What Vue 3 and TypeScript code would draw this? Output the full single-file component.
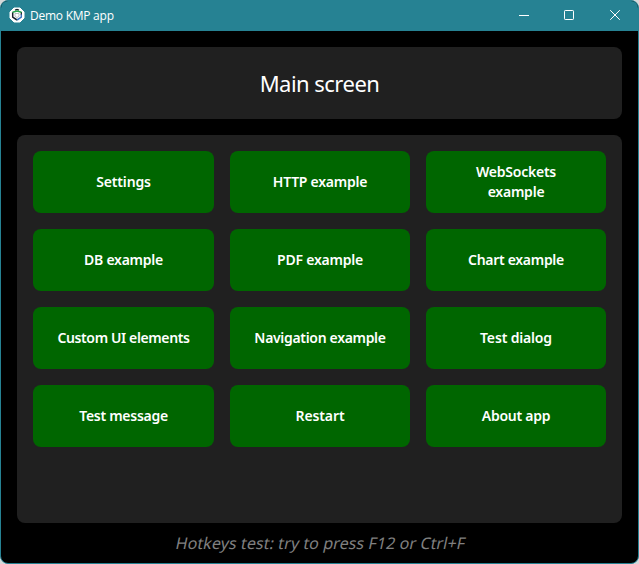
<script setup lang="ts">
interface MenuItem {
  lines: string[]
  spacing: number
}

const items: MenuItem[] = [
  { lines: ['Settings'], spacing: -0.15 },
  { lines: ['HTTP example'], spacing: -0.25 },
  { lines: ['WebSockets', 'example'], spacing: -0.23 },
  { lines: ['DB example'], spacing: -0.26 },
  { lines: ['PDF example'], spacing: -0.22 },
  { lines: ['Chart example'], spacing: -0.3 },
  { lines: ['Custom UI elements'], spacing: -0.38 },
  { lines: ['Navigation example'], spacing: -0.32 },
  { lines: ['Test dialog'], spacing: -0.16 },
  { lines: ['Test message'], spacing: -0.28 },
  { lines: ['Restart'], spacing: -0.1 },
  { lines: ['About app'], spacing: -0.28 },
]
</script>

<template>
  <div class="backdrop">
    <div class="window">
      <header class="titlebar">
        <svg class="logo" width="16" height="16" viewBox="0 0 16 16">
          <path d="M5 1h6l4 4v6l-4 4H5l-4-4V5z" fill="#fff" stroke="#fff" stroke-linejoin="round" />
          <path d="M3.7 5.2v5L8 13" fill="none" stroke="#18212c" stroke-width="1.5" />
          <path d="M6 3.2 8 2.5l2 .7M12.3 5v3" fill="none" stroke="#18212c" stroke-width="1.3" />
          <path d="M3.5 5.2 8 4l4.5 1.2" fill="none" stroke="#28a84d" stroke-width="1.6" />
          <path d="M12.3 7.5v2.7L8 13" fill="none" stroke="#3973bd" stroke-width="1.5" />
          <path d="M6 6.5h4v2.8L8 10.6 6 9.3z" fill="#fff" stroke="#8b999e" stroke-width=".6" />
        </svg>
        <span class="caption">Demo KMP app</span>
        <div class="controls">
          <svg width="46" height="30" viewBox="0 0 46 30"><path d="M18 15.5h10" /></svg>
          <svg width="46" height="30" viewBox="0 0 46 30"><rect x="17.5" y="10.5" width="9" height="9" rx=".7" /></svg>
          <svg width="46" height="30" viewBox="0 0 46 30"><path d="m17.2 10.2 9.6 9.6m0-9.6-9.6 9.6" /></svg>
        </div>
      </header>
      <main class="body">
        <section class="heading"><h1>Main screen</h1></section>
        <section class="panel">
          <button v-for="item in items" :key="item.lines[0]" :style="{ letterSpacing: item.spacing + 'px' }">
            <span v-for="line in item.lines" :key="line">{{ line }}</span>
          </button>
        </section>
        <footer><span>Hotkeys test: try to press F12 or Ctrl+F</span></footer>
      </main>
    </div>
  </div>
</template>

<style>
body { background: #d5d8d9; overflow: hidden; }
</style>

<style scoped>
.backdrop { height: 564px; background: #d5d8d9; }
.window {
  box-sizing: border-box;
  height: 564px;
  border: 1px solid #268293;
  border-radius: 8px;
  background: #000;
  overflow: hidden;
  display: flex;
  flex-direction: column;
}
.titlebar {
  height: 30px;
  flex: none;
  display: flex;
  align-items: center;
  background: #268293;
  color: #fff;
}
.logo { margin-left: 8px; margin-top: -2px; }
.caption {
  margin-left: 5px;
  font: 12px/30px "Open Sans", "Noto Sans", sans-serif;
  letter-spacing: -0.25px;
}
.controls { display: flex; margin-left: auto; margin-right: -1px; }
.controls svg { display: block; fill: none; stroke: #fff; stroke-width: 1; margin-top: -2px; }
.body {
  flex: 1;
  display: flex;
  flex-direction: column;
  padding: 16px 16px 0;
  font-family: "Noto Sans", "Open Sans", sans-serif;
}
.heading {
  height: 72px;
  flex: none;
  display: flex;
  align-items: center;
  justify-content: center;
  background: #202020;
  border-radius: 8px;
}
h1 { margin: 0; font-size: 22px; font-weight: 400; line-height: 30px; letter-spacing: -0.52px; color: #fff; }
.panel {
  box-sizing: border-box;
  height: 388px;
  margin-top: 16px;
  padding: 16px;
  display: grid;
  grid-template-columns: 181px 180px 180px;
  grid-auto-rows: 62px;
  align-content: start;
  gap: 16px;
  background: #202020;
  border-radius: 8px;
}
button {
  display: flex;
  flex-direction: column;
  align-items: center;
  justify-content: center;
  border: 0;
  padding: 0;
  border-radius: 8px;
  background: #006600;
  color: #fff;
  font: 600 14px/20px "Noto Sans", "Open Sans", sans-serif;
}
footer {
  display: flex;
  justify-content: center;
  padding: 8px 0 0 2px;
  color: #808080;
  font-size: 16px;
  line-height: 24px;
  white-space: nowrap;
}
footer span { transform: skewX(-12deg); letter-spacing: 0.1px; }
</style>
